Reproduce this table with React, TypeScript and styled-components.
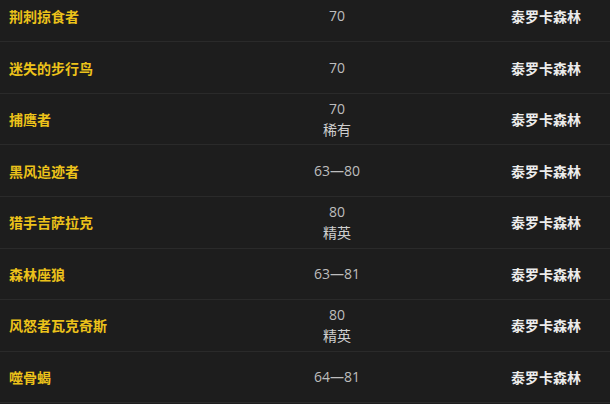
import React from 'react'
import styled, { createGlobalStyle } from 'styled-components'

const GlobalStyle = createGlobalStyle`
  html, body {
    margin: 0;
    padding: 0;
    background: #1d1d1d;
    overflow: hidden;
  }
`

const Table = styled.div`
  width: 610px;
  height: 404px;
  overflow: hidden;
  background: #1d1d1d;
  font-family: 'Noto Sans CJK SC', 'Noto Sans', sans-serif;
`

const Rows = styled.div`
  margin-top: -9.4px;
  display: flex;
  flex-direction: column;
`

const Row = styled.div`
  display: grid;
  grid-template-columns: 274px 126px 1fr;
  align-items: center;
  height: 51.6px;
  box-sizing: border-box;
  border-bottom: 1px solid #2a2a2a;
  background: #1d1d1d;
`

const Name = styled.div`
  padding-left: 9px;
  color: #ecc21a;
  font-size: 14px;
  font-weight: 700;
`

const Level = styled.div`
  display: flex;
  flex-direction: column;
  align-items: center;
  color: #bdbdbd;
  font-family: 'Open Sans', 'Noto Sans CJK SC', sans-serif;
  font-size: 14px;
  line-height: 20px;
`

const Tag = styled.span`
  font-family: 'Noto Sans CJK SC', sans-serif;
  font-size: 14px;
  color: #cfcfcf;
`

const Zone = styled.div`
  padding-left: 111px;
  color: #ececec;
  font-size: 14px;
  font-weight: 700;
`

type Npc = { name: string; level: string; tag?: string; zone: string }

const npcs: Npc[] = [
  { name: '荆刺掠食者', level: '70', zone: '泰罗卡森林' },
  { name: '迷失的步行鸟', level: '70', zone: '泰罗卡森林' },
  { name: '捕鹰者', level: '70', tag: '稀有', zone: '泰罗卡森林' },
  { name: '黑风追迹者', level: '63—80', zone: '泰罗卡森林' },
  { name: '猎手吉萨拉克', level: '80', tag: '精英', zone: '泰罗卡森林' },
  { name: '森林座狼', level: '63—81', zone: '泰罗卡森林' },
  { name: '风怒者瓦克奇斯', level: '80', tag: '精英', zone: '泰罗卡森林' },
  { name: '噬骨蝎', level: '64—81', zone: '泰罗卡森林' },
]

const App = () => (
  <Table>
    <GlobalStyle />
    <Rows>
      {npcs.map((n) => (
        <Row key={n.name}>
          <Name>{n.name}</Name>
          <Level>
            <span>{n.level}</span>
            {n.tag && <Tag>{n.tag}</Tag>}
          </Level>
          <Zone>{n.zone}</Zone>
        </Row>
      ))}
    </Rows>
  </Table>
)

export default App
